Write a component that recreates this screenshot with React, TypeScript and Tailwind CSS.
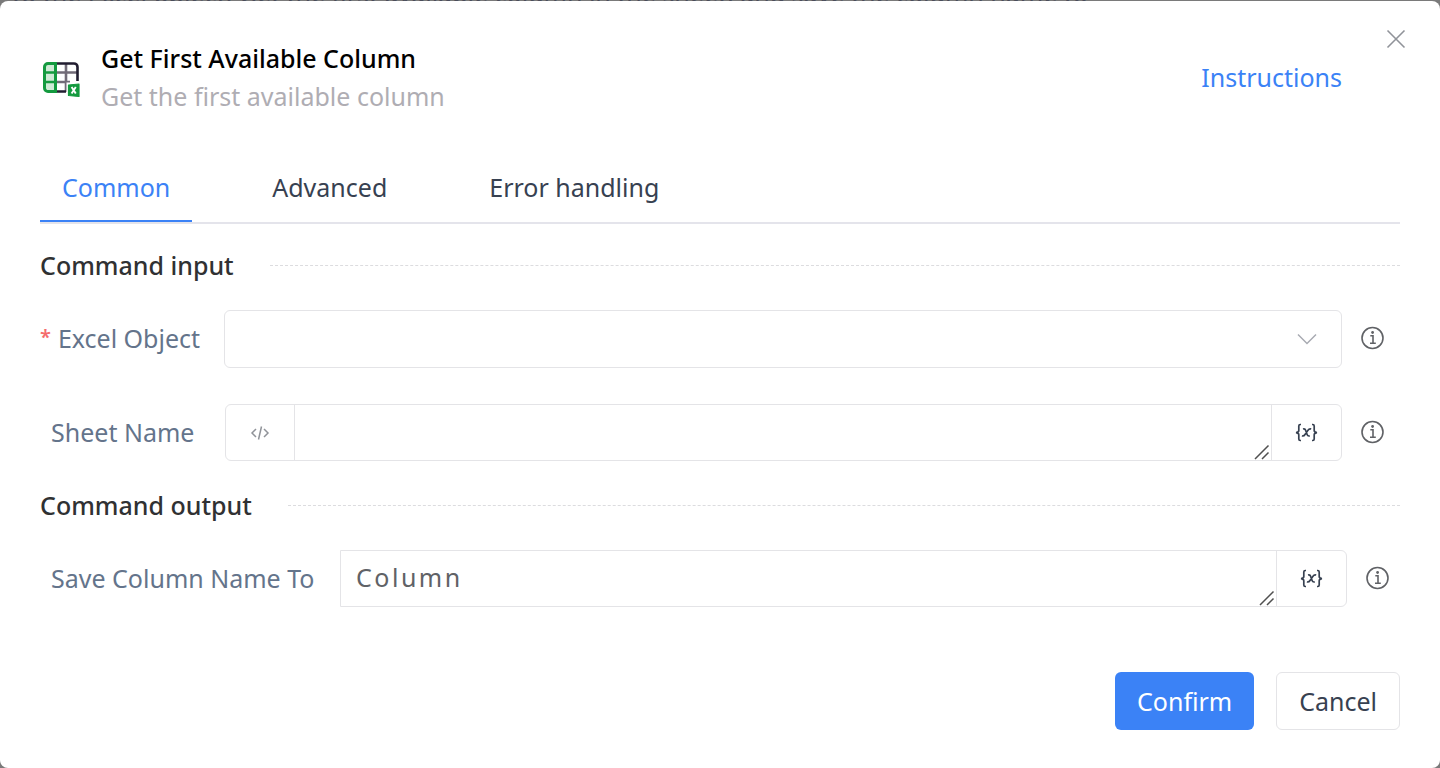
import React from "react";

function SheetIcon() {
  return (
    <svg viewBox="0 0 40 40" className="mt-1 size-10 shrink-0" fill="none" aria-hidden="true">
      <path d="M16 13.500H37M16 23H30M26 5V33" stroke="#716b78" strokeWidth="2.600" />
      <path d="M14 4.500H34A3.500 3.500 0 0 1 37.500 8V22M14 32.500H26" stroke="#211d30" strokeWidth="2.600" />
      <path d="M15.500 4.500H8A3.500 3.500 0 0 0 4.500 8V29A3.500 3.500 0 0 0 8 32.500H15.500Z" fill="#cfead6" stroke="#149a3f" strokeWidth="3" />
      <path d="M4 13.500H16M4 23H16" stroke="#149a3f" strokeWidth="2.600" />
      <path d="M26.500 23.500H40V39H26.500Z" fill="#fff" />
      <path d="M28.500 26 39 25V37.500L28.500 36.500Z" fill="#149a3f" stroke="#149a3f" strokeWidth="1.200" strokeLinejoin="round" />
      <path d="M31.600 28 35.800 34.600M35.800 28 31.600 34.600" stroke="#fff" strokeWidth="1.900" />
    </svg>
  );
}

function InfoButton({ label }: { label: string }) {
  return (
    <button type="button" aria-label={label} className="mb-0.5 ml-[19px] shrink-0 text-[#606266]">
      <svg viewBox="0 0 24 24" className="size-6" fill="none" stroke="currentColor" strokeWidth="1.600" aria-hidden="true">
        <circle cx="11.500" cy="12" r="10.500" />
        <path d="M9.300 9.800H12V17.300M9 17.300H14.800" />
        <circle cx="11.600" cy="6.500" r="1.400" fill="currentColor" stroke="none" />
      </svg>
    </button>
  );
}

function VariableButton() {
  return (
    <button
      type="button"
      aria-label="Insert variable"
      className="flex w-[70px] shrink-0 items-center justify-center border-l border-[#e4e4e7] text-[#374151]"
    >
      <svg viewBox="0 0 24 20" className="h-5 w-6" fill="none" stroke="currentColor" strokeWidth="1.700" aria-hidden="true">
        <path d="M6 1.500H5.300Q3.800 1.500 3.800 3V7.500Q3.800 9.300 1 9.600Q3.800 9.900 3.800 11.700V16Q3.800 17.500 5.300 17.500H6" />
        <path d="M17 1.500H17.700Q19.200 1.500 19.200 3V7.500Q19.200 9.300 22 9.600Q19.200 9.900 19.200 11.700V16Q19.200 17.500 17.700 17.500H17" />
        <path d="M8 6Q10.100 5.400 10.700 7.400L12.100 11.500Q12.700 13.400 14.800 12.900M16.200 6Q14.200 5.400 12.800 7.400L10.200 11.200Q8.900 13.400 6.900 12.900" />
      </svg>
    </button>
  );
}

function TextArea({ id, value }: { id: string; value?: string }) {
  return (
    <div className="relative min-w-0 flex-1">
      <textarea
        id={id}
        rows={1}
        defaultValue={value}
        className="block h-[55px] w-full resize-none px-[15px] py-2 leading-9 tracking-widest text-[#606266] outline-none"
      />
      <svg viewBox="0 0 16 16" className="pointer-events-none absolute right-px bottom-0 size-4" stroke="#505050" strokeWidth="1.500" aria-hidden="true">
        <path d="M1 15 14.500 1.500M8 15 14.500 8.500" />
      </svg>
    </div>
  );
}

function SectionTitle({ children }: { children: string }) {
  return (
    <div className="flex items-center gap-9">
      <h2 className="font-medium text-[#303133]">{children}</h2>
      <div className="flex-1 border-t border-dashed border-[#dcdcdf]" />
    </div>
  );
}

const tabs = ["Common", "Advanced", "Error handling"];

export default function App() {
  return (
    <div className="min-h-screen bg-[#7a7a7a] font-['Noto_Sans',sans-serif] text-[25px] leading-[38px]">
      <div className="flex h-px items-end overflow-hidden pl-3 whitespace-nowrap text-[#4a4d5a]">
        <span className="leading-4">to the Excel object, Get the first available column in the sheet, and save the column name to</span>
      </div>
      <main
        role="dialog"
        aria-labelledby="dialog-title"
        className="relative flex min-h-[767px] flex-col rounded-lg bg-white px-10 pt-[38px] pb-[38px]"
      >
        <button type="button" aria-label="Close" className="absolute top-[28px] right-[34px] text-[#909399]">
          <svg viewBox="0 0 20 20" className="size-5" fill="none" stroke="currentColor" strokeWidth="1.600" aria-hidden="true">
            <path d="M1.500 1.500 18.500 18.500M18.500 1.500 1.500 18.500" />
          </svg>
        </button>

        <header className="flex items-center">
          <SheetIcon />
          <div className="ml-[21px] flex-1">
            <h1 id="dialog-title" className="font-medium text-black">Get First Available Column</h1>
            <p className="text-[#afadb3]">Get the first available column</p>
          </div>
          <a href="#instructions" className="mr-[58px] text-[#3b82f6]">Instructions</a>
        </header>

        <div role="tablist" className="mt-[39px] flex gap-[58px] border-b-2 border-[#e4e4eb]">
          {tabs.map((tab, i) => (
            <button
              key={tab}
              type="button"
              role="tab"
              aria-selected={i === 0}
              className={
                i === 0
                  ? "border-b-2 border-[#3b82f6] px-[22px] pt-[14px] pb-[14px] text-[#3b82f6]"
                  : "border-b-2 border-transparent px-[22px] pt-[14px] pb-[14px] text-[#374151]"
              }
            >
              {tab}
            </button>
          ))}
        </div>

        <div className="mt-[22px]">
          <SectionTitle>Command input</SectionTitle>
        </div>

        <div className="mt-[26px] flex items-center">
          <label htmlFor="excel-object" className="flex w-[184px] shrink-0 gap-[7px] pb-0.5 text-[#64748b]">
            <span className="text-xl leading-9 font-semibold text-[#f56c6c]">*</span>
            Excel Object
          </label>
          <div className="relative min-w-0 flex-1">
            <select
              id="excel-object"
              defaultValue=""
              className="block h-[58px] w-full appearance-none rounded-md border border-[#e4e4e7] bg-white px-4 outline-none"
            >
              <option value="" />
            </select>
            <svg viewBox="0 0 20 12" className="pointer-events-none absolute top-[23px] right-[25px] h-3 w-5" fill="none" stroke="#a8abb2" strokeWidth="1.500" aria-hidden="true">
              <path d="M1 1.500 10 10.500 19 1.500" />
            </svg>
          </div>
          <div className="flex w-[58px]">
            <InfoButton label="About Excel Object" />
          </div>
        </div>

        <div className="mt-9 flex items-center">
          <label htmlFor="sheet-name" className="w-[185px] shrink-0 pb-0.5 pl-[11px] text-[#64748b]">Sheet Name</label>
          <div className="flex min-w-0 flex-1 overflow-hidden rounded-md border border-[#e4e4e7]">
            <button
              type="button"
              aria-label="Expression mode"
              className="flex w-[69px] shrink-0 items-center justify-center border-r border-[#e4e4e7] text-[#909399]"
            >
              <svg viewBox="0 0 20 14" className="h-[14px] w-5" fill="none" stroke="currentColor" strokeWidth="1.500" aria-hidden="true">
                <path d="M6 3 2 7 6 11M14 3 18 7 14 11M11.500 0.500 8.500 13.500" />
              </svg>
            </button>
            <TextArea id="sheet-name" />
            <VariableButton />
          </div>
          <div className="flex w-[58px]">
            <InfoButton label="About Sheet Name" />
          </div>
        </div>

        <div className="mt-[25px]">
          <SectionTitle>Command output</SectionTitle>
        </div>

        <div className="mt-[26px] flex items-center">
          <label htmlFor="save-column" className="w-[300px] shrink-0 pb-0.5 pl-[11px] text-[#64748b]">Save Column Name To</label>
          <div className="flex min-w-0 flex-1 overflow-hidden rounded-r-md border border-[#e4e4e7]">
            <TextArea id="save-column" value="Column" />
            <VariableButton />
          </div>
          <div className="flex w-[53px]">
            <InfoButton label="About Save Column Name To" />
          </div>
        </div>

        <footer className="mt-auto flex justify-end gap-[22px]">
          <button type="button" className="h-[58px] rounded-md bg-[#3b82f6] px-[22px] text-white">Confirm</button>
          <button type="button" className="h-[58px] rounded-md border border-[#e4e4e7] px-[22px] text-[#374151]">Cancel</button>
        </footer>
      </main>
    </div>
  );
}
